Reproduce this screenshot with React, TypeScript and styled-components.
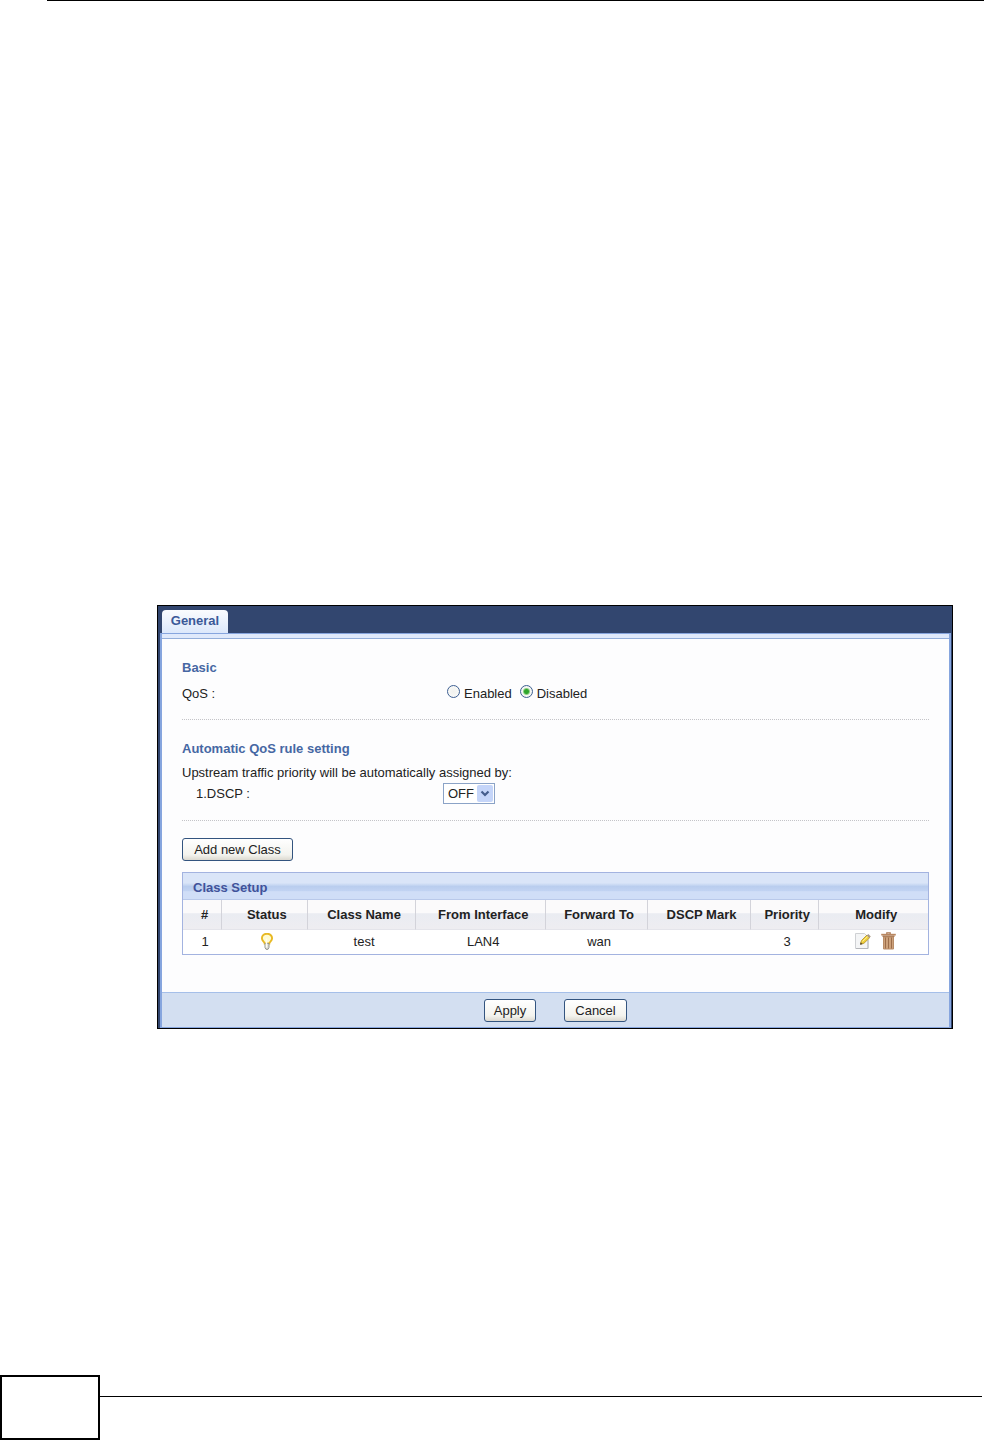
import React, { useState } from "react";
import styled, { createGlobalStyle } from "styled-components";

const GlobalStyle = createGlobalStyle`
  * { box-sizing: border-box; }
  body {
    margin: 0;
    background: #fff;
    color: #222;
    font-family: "Liberation Sans", Arial, sans-serif;
    font-size: 13px;
    line-height: 16px;
  }
  button, select, input { font: inherit; color: inherit; }
`;

const Page = styled.div`
  display: flex;
  flex-direction: column;
  min-height: 100vh;
`;

const PageRule = styled.header`
  margin-left: 47px;
  border-top: 1px solid #000;
`;

const Main = styled.main`
  padding: 604px 31px 48px 157px;
`;

const Panel = styled.section`
  border: 1px solid #000;
  background: #32466f;
`;

const TabBar = styled.nav`
  display: flex;
  padding: 4px 4px 0;
`;

const Tab = styled.button`
  width: 66px;
  height: 23px;
  padding: 0 0 2px;
  border: 0;
  border-radius: 4px 4px 0 0;
  background: linear-gradient(#fbfcfe, #dce8fb);
  color: #3b5998;
  font-weight: bold;
`;

const Sheet = styled.div`
  margin: 0 1px 0 2px;
  border: solid #86a5de;
  border-width: 0 2px 1px;
  background: #fdfdfe;
`;

const Band = styled.div`
  height: 6px;
  border-top: 1px solid #86a5de;
  border-bottom: 1px solid #93aeda;
  background: #dfe9fb;
`;

const Content = styled.div`
  padding: 20px 20px 37px;
`;

const Group = styled.section`
  padding-bottom: 16px;
  margin-bottom: 20px;
  border-bottom: 1px dotted #c4c4c8;
`;

const Heading = styled.h2`
  margin: 0 0 7px;
  color: #4667a3;
  font-size: 13px;
  line-height: 18px;
`;

const Note = styled.p`
  margin: 0 0 2px;
`;

const Field = styled.div<{ $indent?: boolean }>`
  display: flex;
  align-items: center;
  min-height: ${(p) => (p.$indent ? 21 : 19)}px;
`;

const FieldName = styled.span<{ $indent?: boolean }>`
  width: ${(p) => (p.$indent ? 261 : 265)}px;
  padding-left: ${(p) => (p.$indent ? 14 : 0)}px;
`;

const Choice = styled.label`
  display: flex;
  align-items: center;
  gap: 4px;
  margin-right: 8px;
`;

const Radio = styled.input`
  appearance: none;
  width: 13px;
  height: 13px;
  margin: 0 0 4px;
  border: 1px solid #3d5f92;
  border-radius: 50%;
  background: radial-gradient(#f0f1ee, #fbfbfa);
  &:checked {
    background: radial-gradient(circle, #2fa52c 0 2px, #8ccf83 3px, #f4f6f2 4px);
  }
`;

const SelectBox = styled.div`
  position: relative;
  width: 52px;
  height: 21px;
`;

const Select = styled.select`
  appearance: none;
  width: 100%;
  height: 100%;
  padding: 0 18px 0 4px;
  border: 1px solid #8ba3c7;
  border-radius: 0;
  background: #fff;
`;

const Arrow = styled.svg`
  position: absolute;
  top: 2px;
  right: 2px;
  pointer-events: none;
`;

const Button = styled.button<{ $width: number }>`
  width: ${(p) => p.$width}px;
  height: 23px;
  padding: 0;
  border: 1px solid #33547f;
  border-radius: 3px;
  background: linear-gradient(#fff, #f3f3ee 75%, #dcd9d0);
`;

const AddRow = styled.div`
  margin: -3px 0 11px;
  display: flex;
`;

const Table = styled.table`
  width: 100%;
  table-layout: fixed;
  border-collapse: separate;
  border-spacing: 0;
  border: 1px solid #a3b3e0;
  text-align: center;
`;

const Title = styled.th`
  height: 27px;
  padding: 3px 10px 0;
  border-bottom: 1px solid #b9c9ea;
  background: linear-gradient(#dae5f8 0 38%, #b9cdee 52%, #c1d3f2 68%, #d0def7 72%);
  color: #40529a;
  text-align: left;
`;

const Head = styled.th`
  height: 30px;
  padding: 0 0 0 5px;
  border-left: 1px solid #d3d3da;
  border-bottom: 1px solid #e4e4ea;
  background: linear-gradient(#fbfafb 0 45%, #eaecf2 47%, #eeedf1);
  &:first-child { border-left: 0; }
`;

const Cell = styled.td`
  height: 24px;
  padding: 0 0 0 6px;
  background: #fff;
`;

const Actions = styled.div`
  display: flex;
  justify-content: center;
  gap: 8px;
  padding-bottom: 2px;
`;

const IconButton = styled.button`
  display: flex;
  padding: 0;
  border: 0;
  background: none;
`;

const Bulb = styled.svg`
  display: block;
  margin: 0 auto;
`;

const Buttons = styled.div`
  display: flex;
  justify-content: center;
  gap: 28px;
  height: 35px;
  padding-top: 6px;
  border-top: 1px solid #a5bfe9;
  background: #d3dff1;
`;

const PageFooter = styled.footer`
  display: flex;
  margin-top: auto;
  padding-right: 2px;
`;

const NumberBox = styled.div`
  width: 100px;
  height: 65px;
  border: 2px solid #000;
`;

const FooterRule = styled.div`
  flex: 1;
  margin-top: 21px;
  border-top: 1px solid #000;
`;

const columns = [
  { name: "#", width: "5.1%" },
  { name: "Status", width: "11.5%" },
  { name: "Class Name", width: "14.6%" },
  { name: "From Interface", width: "17.4%" },
  { name: "Forward To", width: "13.7%" },
  { name: "DSCP Mark", width: "13.8%" },
  { name: "Priority", width: "9.2%" },
  { name: "Modify", width: "14.7%" },
];

const BulbIcon = () => (
  <Bulb width="14" height="18" viewBox="0 0 14 18" role="img" aria-label="Active">
    <path d="M4.7 10.500C4.7 8.800 1.900 8 1.900 5.200a5.100 4.500 0 0 1 10.200 0c0 2.800-2.800 3.600-2.800 5.300z" fill="#fffbd0" stroke="#e8b923" strokeWidth="1.900" />
    <path d="M5 10.500v4l1 1.800h2l1-1.800v-4z" fill="#dcdcd6" stroke="#94948b" />
    <path d="M6.500 5.500v9" stroke="#fffdf0" strokeWidth="1.500" />
  </Bulb>
);

const EditIcon = () => (
  <svg width="18" height="18" viewBox="0 0 18 18" aria-hidden="true">
    <path d="M1.500 1.500h9L14 5v11.500H1.500z" fill="#f4f5f6" stroke="#cfd1d4" />
    <path d="M14 8v8.500H2" fill="none" stroke="#b4b6ba" />
    <path d="m6.500 12 1-3.500 5.500-5.500 2.700 2.700-5.700 5.500z" fill="#efcf3c" stroke="#c0a034" />
    <path d="m8.500 9.500 5.500-5.300" stroke="#fff09a" />
    <path d="m12.700 3.500 1.600-1.600 2.500 2.500-1.600 1.600z" fill="#a99a86" />
    <path d="m6 12.800.7-2.500 1.900 1.900z" fill="#58482e" />
  </svg>
);

const TrashIcon = () => (
  <svg width="18" height="18" viewBox="0 0 18 18" aria-hidden="true">
    <path d="M6.800 2V.8h3.400V2" fill="none" stroke="#a9754f" strokeWidth="1.200" />
    <path d="M1.200 1.800h14.600v1.700H1.200z" fill="#b98760" />
    <path d="M2.500 3.500h12v1.500h-12z" fill="#a87650" />
    <path d="M3.500 5h10v12h-10z" fill="#cda27b" stroke="#b98d68" />
    <path d="M5.500 5.500v11M8.500 5.500v11M11.500 5.500v11" stroke="#9c6d4a" />
  </svg>
);

export default function App() {
  const [qos, setQos] = useState("Disabled");
  const [dscp, setDscp] = useState("OFF");

  return (
    <Page>
      <GlobalStyle />
      <PageRule />
      <Main>
        <Panel>
          <TabBar>
            <Tab type="button">General</Tab>
          </TabBar>
          <Sheet>
            <Band />
            <Content>
              <Group>
                <Heading>Basic</Heading>
                <Field role="radiogroup" aria-labelledby="qos-name">
                  <FieldName id="qos-name">QoS :</FieldName>
                  {["Enabled", "Disabled"].map((option) => (
                    <Choice key={option}>
                      <Radio
                        type="radio"
                        name="qos"
                        value={option}
                        checked={qos === option}
                        onChange={() => setQos(option)}
                      />
                      {option}
                    </Choice>
                  ))}
                </Field>
              </Group>
              <Group>
                <Heading>Automatic QoS rule setting</Heading>
                <Note>Upstream traffic priority will be automatically assigned by:</Note>
                <Field $indent>
                  <FieldName as="label" htmlFor="dscp" $indent>1.DSCP :</FieldName>
                  <SelectBox>
                    <Select id="dscp" value={dscp} onChange={(e) => setDscp(e.target.value)}>
                      <option>OFF</option>
                      <option>ON</option>
                    </Select>
                    <Arrow width="16" height="17" viewBox="0 0 16 17" aria-hidden="true">
                      <rect width="16" height="17" rx="2" fill="#c5d5f9" />
                      <path d="m4.500 6.500 3.500 3.500 3.500-3.500" fill="none" stroke="#445c8c" strokeWidth="2.200" />
                    </Arrow>
                  </SelectBox>
                </Field>
              </Group>
              <AddRow>
                <Button type="button" $width={111}>Add new Class</Button>
              </AddRow>
              <Table>
                <colgroup>
                  {columns.map((c) => (
                    <col key={c.name} width={c.width} />
                  ))}
                </colgroup>
                <thead>
                  <tr>
                    <Title colSpan={columns.length}>Class Setup</Title>
                  </tr>
                  <tr>
                    {columns.map((c) => (
                      <Head key={c.name} scope="col">{c.name}</Head>
                    ))}
                  </tr>
                </thead>
                <tbody>
                  <tr>
                    <Cell>1</Cell>
                    <Cell><BulbIcon /></Cell>
                    <Cell>test</Cell>
                    <Cell>LAN4</Cell>
                    <Cell>wan</Cell>
                    <Cell />
                    <Cell>3</Cell>
                    <Cell>
                      <Actions>
                        <IconButton type="button" aria-label="Edit"><EditIcon /></IconButton>
                        <IconButton type="button" aria-label="Delete"><TrashIcon /></IconButton>
                      </Actions>
                    </Cell>
                  </tr>
                </tbody>
              </Table>
            </Content>
            <Buttons>
              <Button type="button" $width={52}>Apply</Button>
              <Button type="button" $width={63}>Cancel</Button>
            </Buttons>
          </Sheet>
        </Panel>
      </Main>
      <PageFooter>
        <NumberBox />
        <FooterRule />
      </PageFooter>
    </Page>
  );
}
